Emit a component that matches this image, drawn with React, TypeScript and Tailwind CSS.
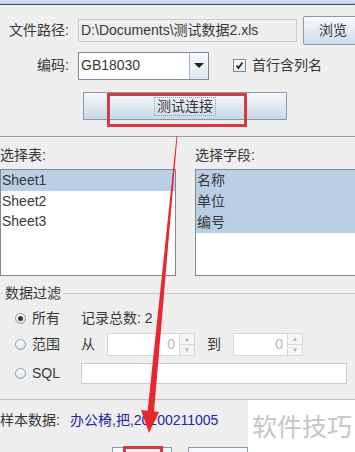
const font = { fontFamily: '"Liberation Sans", "Noto Sans CJK SC", sans-serif' };

function Radio({ checked }: { checked?: boolean }) {
    return (
        <span className="w-[11px] h-[11px] rounded-full border border-[#8a9aaa] bg-gradient-to-b from-white to-[#d8e2ec] flex items-center justify-center shrink-0">
            {checked && <span className="w-[5px] h-[5px] rounded-full bg-[#333]" />}
        </span>
    );
}

function Spinner({ width }: { width: string }) {
    return (
        <div className={`${width} h-[23px] flex border border-[#d0d8e0] bg-white shrink-0`}>
            <div className="flex-1 flex items-center justify-end pr-[4px] text-[#b8b8b8]">0</div>
            <div className="w-[15px] flex flex-col border-l border-[#d0d8e0] bg-[#f4f4f4]">
                <div className="flex-1 flex items-center justify-center border-b border-[#d0d8e0] text-[6px] text-[#b0b0b0]">▲</div>
                <div className="flex-1 flex items-center justify-center text-[6px] text-[#b0b0b0]">▼</div>
            </div>
        </div>
    );
}

export default function App() {
    return (
        <div className="relative w-[355px] h-[452px] overflow-hidden bg-[#eeeeee] text-[14px] text-[#383838]" style={font}>
            {/* window frame top */}
            <div className="h-[4px] bg-gradient-to-b from-[#dbe6f2] to-[#b8cce0]" />
            <div className="h-px bg-[#3e4e60]" />

            {/* file path */}
            <div className="mt-[11px] h-[29px] flex items-center">
                <div className="w-[78px] pr-[9px] text-right shrink-0">文件路径:</div>
                <div className="w-[219px] h-[23px] border border-[#c4ccd4] bg-[#eeeeee] flex items-center pl-[2px] shrink-0">
                    D:\Documents\测试数据2.xls
                </div>
                <div className="ml-[6px] w-[60px] h-[29px] shrink-0 border border-[#8a9aaa] rounded-[2px] bg-gradient-to-b from-[#f8fafc] to-[#cddcec] flex items-center justify-center">
                    浏览
                </div>
            </div>

            {/* encoding */}
            <div className="mt-[6px] h-[29px] flex items-center">
                <div className="w-[78px] pr-[9px] text-right shrink-0">编码:</div>
                <div className="w-[131px] h-[28px] border border-[#7a8a9c] bg-white flex shrink-0">
                    <div className="flex-1 flex items-center pl-[2px]">GB18030</div>
                    <div className="w-[19px] border-l border-[#a8b4c0] bg-gradient-to-b from-[#f8fafc] to-[#dde6ef] flex items-center justify-center">
                        <span className="w-0 h-0 border-l-[5px] border-r-[5px] border-t-[5px] border-l-transparent border-r-transparent border-t-[#222]" />
                    </div>
                </div>
                <div className="ml-[24px] w-[13px] h-[13px] border border-[#7a8a9c] bg-gradient-to-b from-white to-[#e4ebf2] flex items-center justify-center shrink-0">
                    <svg width="9" height="9" viewBox="0 0 9 9">
                        <path d="M1.5 4.5 L3.5 7 L7.5 1.5" fill="none" stroke="#222" strokeWidth="1.8" />
                    </svg>
                </div>
                <div className="ml-[6px]">首行含列名</div>
            </div>

            {/* test button */}
            <div className="mt-[12px] ml-[83px] w-[204px] h-[28px] border border-[#8a9aaa] bg-gradient-to-b from-[#f8fafc] to-[#c8d8e9] flex items-center justify-center">
                <span className="border border-dotted border-[#8899aa] px-[2px] leading-[17px]">测试连接</span>
            </div>

            <div className="mt-[16px] h-px bg-[#8e9eae]" />

            {/* lists */}
            <div className="mt-[8px] h-[20px] flex items-center">
                <div className="w-[195px] shrink-0">选择表:</div>
                <div>选择字段:</div>
            </div>
            <div className="mt-[4px] flex">
                <div className="w-[176px] h-[107px] border border-[#7f8a96] bg-white shrink-0">
                    <div className="h-[21px] pl-[1px] flex items-center bg-[#b8cfe5]">Sheet1</div>
                    <div className="h-[20px] pl-[1px] flex items-center">Sheet2</div>
                    <div className="h-[20px] pl-[1px] flex items-center">Sheet3</div>
                </div>
                <div className="ml-[19px] w-[170px] h-[107px] border border-[#7f8a96] bg-white shrink-0">
                    <div className="h-[21px] pl-[1px] flex items-center bg-[#b8cfe5]">名称</div>
                    <div className="h-[21px] pl-[1px] flex items-center bg-[#b8cfe5]">单位</div>
                    <div className="h-[21px] pl-[1px] flex items-center bg-[#b8cfe5]">编号</div>
                </div>
            </div>

            {/* data filter */}
            <div className="mt-[9px] h-[16px] flex items-center">
                <div className="w-[3px] h-px bg-[#c4ccd6]" />
                <div className="px-[2px]">数据过滤</div>
                <div className="flex-1 h-px bg-[#c4ccd6]" />
            </div>
            <div className="mt-[5px] h-[24px] flex items-center">
                <div className="w-[81px] pl-[15px] flex items-center gap-[6px] shrink-0">
                    <Radio checked />
                    <span>所有</span>
                </div>
                <div>记录总数: 2</div>
            </div>
            <div className="mt-[3px] h-[23px] flex items-center">
                <div className="w-[81px] pl-[15px] flex items-center gap-[6px] shrink-0">
                    <Radio />
                    <span>范围</span>
                </div>
                <div className="w-[26px] shrink-0">从</div>
                <Spinner width="w-[88px]" />
                <div className="ml-[12px] w-[26px] shrink-0">到</div>
                <Spinner width="w-[70px]" />
            </div>
            <div className="mt-[7px] h-[21px] flex items-center">
                <div className="w-[81px] pl-[15px] flex items-center gap-[6px] shrink-0">
                    <Radio />
                    <span>SQL</span>
                </div>
                <div className="w-[266px] h-[21px] border border-[#c4ccd6] bg-white shrink-0" />
            </div>

            <div className="mt-[15px] h-px bg-[#b4c0cc]" />

            {/* sample */}
            <div className="mt-[10px] h-[20px] flex items-center">
                <div className="w-[70px] shrink-0">样本数据:</div>
                <div className="text-[#2424a8]">办公椅,把,20200211005</div>
            </div>

            {/* bottom buttons */}
            <div className="mt-[17px] flex">
                <div className="ml-[112px] w-[60px] h-[28px] border border-[#8a9aaa] bg-gradient-to-b from-[#f8fafc] to-[#cddcec] shrink-0" />
                <div className="ml-[16px] w-[60px] h-[28px] border border-[#8a9aaa] bg-gradient-to-b from-[#f8fafc] to-[#cddcec] shrink-0" />
            </div>

            {/* annotations */}
            <div className="absolute left-[107px] top-[93px] w-[140px] h-[34px] border-[3px] border-[#d9383c]" />
            <div className="absolute left-[123px] top-[446px] w-[40px] h-[14px] border-[3px] border-[#d9383c]" />
            <svg className="absolute left-0 top-0" width="355" height="452" viewBox="0 0 355 452">
                <polygon points="176.6,136 177.4,136 154,412 147.5,412" fill="#e8282c" />
                <polygon points="141,410 159,412 149,433" fill="#e8282c" />
            </svg>

            {/* watermark */}
            <div className="absolute left-[248px] top-[400px] w-[107px] h-[52px] bg-white flex items-center pl-[4px] text-[25px] text-[#c6c6c6]" style={{ fontFamily: '"Noto Sans CJK SC", sans-serif' }}>
                软件技巧
            </div>
        </div>
    );
}
